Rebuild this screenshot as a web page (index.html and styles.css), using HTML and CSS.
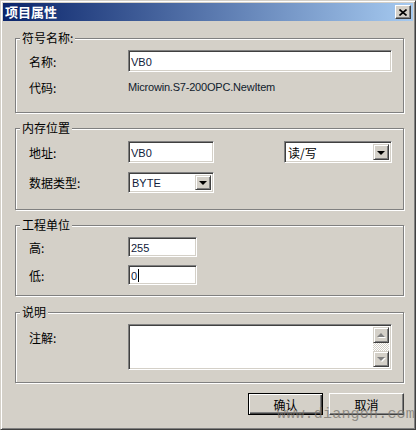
FILE: index.html
```html
<!DOCTYPE html>
<html lang="zh-CN">
<head>
    <meta charset="UTF-8">
    <title>项目属性</title>
    <link rel="stylesheet" href="styles.css">
</head>
<body>
    <div class="window">
        <div class="titlebar">
            <span class="title">项目属性</span>
            <span class="close">
                <svg width="8" height="7" viewBox="0 0 8 7">
                    <path d="M0.5 0.5 L7.5 6.5 M7.5 0.5 L0.5 6.5" stroke="#000" stroke-width="1.6"/>
                </svg>
            </span>
        </div>

        <div class="group g1">
            <span class="legend">符号名称:</span>
            <div class="row">
                <span class="label">名称:</span>
                <div class="field wide">VB0</div>
            </div>
            <div class="row r2">
                <span class="label">代码:</span>
                <span class="value">Microwin.S7-200OPC.NewItem</span>
            </div>
        </div>

        <div class="group g2">
            <span class="legend">内存位置</span>
            <div class="row">
                <span class="label">地址:</span>
                <div class="field short">VB0</div>
                <div class="combo rw">
                    <span class="combo-text cjk">读/写</span>
                    <span class="drop"><span class="tri"></span></span>
                </div>
            </div>
            <div class="row r2">
                <span class="label">数据类型:</span>
                <div class="combo type">
                    <span class="combo-text">BYTE</span>
                    <span class="drop"><span class="tri"></span></span>
                </div>
            </div>
        </div>

        <div class="group g3">
            <span class="legend">工程单位</span>
            <div class="row">
                <span class="label">高:</span>
                <div class="field num">255</div>
            </div>
            <div class="row r2">
                <span class="label">低:</span>
                <div class="field num">0<span class="caret"></span></div>
            </div>
        </div>

        <div class="group g4">
            <span class="legend">说明</span>
            <div class="row top">
                <span class="label">注解:</span>
                <div class="memo">
                    <div class="memo-text"></div>
                    <div class="scrollbar">
                        <span class="sbtn"><span class="arrow up"></span></span>
                        <span class="track"></span>
                        <span class="sbtn"><span class="arrow down"></span></span>
                    </div>
                </div>
            </div>
        </div>

        <div class="buttons">
            <span class="btn default">确认</span>
            <span class="btn">取消</span>
        </div>

        <span class="watermark">www.diangon.com</span>
    </div>
</body>
</html>
```

FILE: styles.css
```css
html, body {
    margin: 0;
    padding: 0;
    background: #d4d0c8;
}

body {
    font-family: "Noto Sans CJK SC", "Liberation Sans", sans-serif;
    font-size: 12px;
    color: #000;
}

.window {
    position: relative;
    width: 416px;
    height: 430px;
    box-sizing: border-box;
    padding: 2px;
    border: 1px solid;
    border-color: #d4d0c8 #404040 #404040 #d4d0c8;
    box-shadow: inset 1px 1px 0 #fff, inset -1px -1px 0 #808080;
    background: #d4d0c8;
    overflow: hidden;
}

.titlebar {
    height: 18px;
    display: flex;
    align-items: center;
    justify-content: space-between;
    padding: 0 2px;
    background: linear-gradient(to right, #0a246a, #a6caf0);
}

.title {
    color: #fff;
    font-weight: bold;
    font-size: 13px;
    line-height: 18px;
    letter-spacing: 0;
}

.close {
    width: 16px;
    height: 14px;
    box-sizing: border-box;
    display: flex;
    align-items: center;
    justify-content: center;
    background: #d4d0c8;
    border: 1px solid;
    border-color: #fff #404040 #404040 #fff;
    box-shadow: inset -1px -1px 0 #808080;
}

.group {
    position: relative;
    box-sizing: border-box;
    margin: 15px 9px 0 12px;
    padding: 11px 11px 0 13px;
    border: 1px solid #808080;
    box-shadow: inset 1px 1px 0 #fff, 1px 1px 0 #fff;
}

.g1 { margin-top: 17px; height: 75px; }
.g2 { height: 82px; padding-top: 12px; }
.g3 { height: 71px; }
.g4 { height: 71px; margin-top: 16px; }

.legend {
    position: absolute;
    top: -9px;
    left: 4px;
    padding: 0 2px;
    line-height: 15px;
    background: #d4d0c8;
}

.row {
    display: flex;
    align-items: center;
    height: 22px;
}

.row.top {
    align-items: flex-start;
    height: 46px;
}

.row.top .label {
    padding-top: 6px;
}

.g1 .r2 { margin-top: 4px; }
.g2 .r2 { margin-top: 9px; height: 21px; }
.g3 .row { height: 20px; }
.g3 .r2 { margin-top: 8px; }

.label {
    width: 99px;
    flex: none;
    line-height: 15px;
}

.value {
    font-family: "Liberation Sans", sans-serif;
    font-size: 11px;
    letter-spacing: -0.2px;
    color: #10202c;
}

.field,
.combo,
.memo {
    box-sizing: border-box;
    height: 100%;
    background: #fff;
    border: 1px solid;
    border-color: #808080 #fff #fff #808080;
    box-shadow: inset 1px 1px 0 #404040, inset -1px -1px 0 #d4d0c8;
    font-family: "Liberation Sans", sans-serif;
    font-size: 11px;
}

.field {
    display: flex;
    align-items: center;
    padding: 1px 2px 0 2px;
    color: #10203a;
}

.wide { flex: 1; }
.short { width: 86px; }
.num { width: 69px; }

.caret {
    display: inline-block;
    width: 1px;
    height: 13px;
    margin-left: 1px;
    background: #000;
}

.combo {
    display: flex;
    align-items: stretch;
    padding: 2px;
}

.combo.rw {
    width: 108px;
    margin-left: auto;
}

.combo.type {
    width: 86px;
}

.combo-text {
    flex: 1;
    display: flex;
    align-items: center;
    padding-left: 1px;
    color: #10203a;
}

.combo-text.cjk {
    font-family: "Noto Sans CJK SC", sans-serif;
    font-size: 12px;
    color: #000;
}

.drop {
    width: 16px;
    flex: none;
    box-sizing: border-box;
    display: flex;
    align-items: center;
    justify-content: center;
    background: #d4d0c8;
    border: 1px solid;
    border-color: #d4d0c8 #404040 #404040 #d4d0c8;
    box-shadow: inset 1px 1px 0 #fff, inset -1px -1px 0 #808080;
}

.tri {
    width: 0;
    height: 0;
    border-left: 4px solid transparent;
    border-right: 4px solid transparent;
    border-top: 4px solid #000;
    margin-top: 1px;
}

.memo {
    flex: 1;
    display: flex;
    padding: 2px;
}

.memo-text {
    flex: 1;
}

.scrollbar {
    width: 16px;
    display: flex;
    flex-direction: column;
}

.sbtn {
    height: 16px;
    box-sizing: border-box;
    display: flex;
    align-items: center;
    justify-content: center;
    background: #d4d0c8;
    border: 1px solid;
    border-color: #d4d0c8 #404040 #404040 #d4d0c8;
    box-shadow: inset 1px 1px 0 #fff, inset -1px -1px 0 #808080;
}

.track {
    flex: 1;
    background-image: repeating-conic-gradient(#fff 0 25%, #d4d0c8 0 50%);
    background-size: 2px 2px;
}

.arrow {
    width: 0;
    height: 0;
    border-left: 4px solid transparent;
    border-right: 4px solid transparent;
}

.arrow.up {
    border-bottom: 4px solid #808080;
    filter: drop-shadow(1px 1px 0 #fff);
}

.arrow.down {
    border-top: 4px solid #808080;
    filter: drop-shadow(1px 1px 0 #fff);
}

.buttons {
    display: flex;
    justify-content: flex-end;
    gap: 6px;
    margin: 10px 9px 0 0;
}

.btn {
    width: 75px;
    height: 22px;
    box-sizing: border-box;
    display: flex;
    align-items: center;
    justify-content: center;
    background: #d4d0c8;
    border: 1px solid;
    border-color: #fff #404040 #404040 #fff;
    box-shadow: inset -1px -1px 0 #808080;
    line-height: 15px;
}

.btn.default {
    border-color: #000;
    box-shadow: inset 1px 1px 0 #fff, inset -1px -1px 0 #404040, inset -2px -2px 0 #808080;
}

.watermark {
    position: absolute;
    left: 276px;
    top: 405px;
    font-family: "Liberation Mono", monospace;
    font-size: 15px;
    letter-spacing: 0.2px;
    color: rgba(120, 116, 110, 0.75);
    pointer-events: none;
}
```
